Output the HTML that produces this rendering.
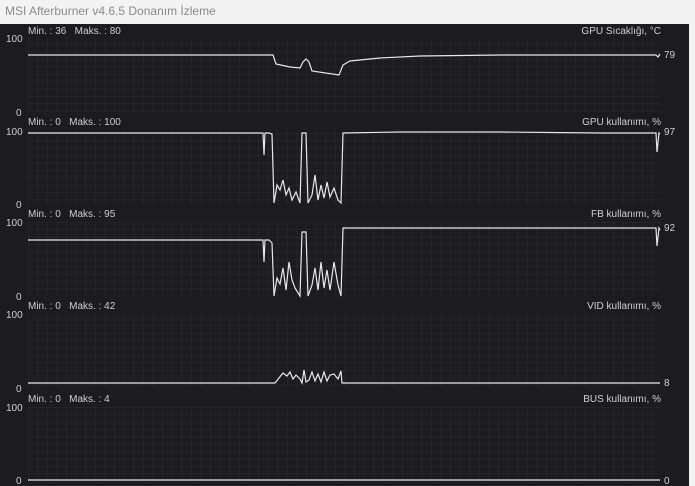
<!DOCTYPE html>
<html><head><meta charset="utf-8"><style>
html,body{margin:0;padding:0;width:695px;height:486px;overflow:hidden;background:#f3f3f3;font-family:"Liberation Sans",sans-serif}
#t{position:absolute;left:0;top:0;width:695px;height:24px;background:#f3f3f3;color:#8a8a8a;font-size:12px;line-height:22px;padding-left:5px;box-sizing:border-box}
#g{position:absolute;left:0;top:24px;width:689px;height:462px;background:#1c1c1e}
text{white-space:pre}
</style></head><body>
<div id="t">MSI Afterburner v4.6.5 Donanım İzleme</div>
<div id="g"></div>
<svg width="695" height="486" style="position:absolute;left:0;top:0" font-family="Liberation Sans, sans-serif">
<defs>
<pattern id="gr" x="28" y="0" width="9.6" height="7.4" patternUnits="userSpaceOnUse">
<path d="M0 0V7.4M0 0H9.6" stroke="#2d2d30" stroke-width="1" fill="none"/>
</pattern>
</defs>
<g>
<rect x="28" y="38" width="633" height="74" fill="url(#gr)"/>
<rect x="28" y="131" width="633" height="74" fill="url(#gr)"/>
<rect x="28" y="222" width="633" height="74" fill="url(#gr)"/>
<rect x="28" y="314" width="633" height="74" fill="url(#gr)"/>
<rect x="28" y="407" width="633" height="74" fill="url(#gr)"/>
</g>
<g fill="#cfcfcf" font-size="10">
<text x="6" y="42">100</text><text x="16" y="116">0</text>
<text x="6" y="135">100</text><text x="16" y="208">0</text>
<text x="6" y="226">100</text><text x="16" y="300">0</text>
<text x="6" y="318">100</text><text x="16" y="392">0</text>
<text x="6" y="411">100</text><text x="16" y="484">0</text>
<text x="28" y="34" xml:space="preserve">Min. : 36   Maks. : 80</text>
<text x="28" y="125" xml:space="preserve">Min. : 0   Maks. : 100</text>
<text x="28" y="217" xml:space="preserve">Min. : 0   Maks. : 95</text>
<text x="28" y="309" xml:space="preserve">Min. : 0   Maks. : 42</text>
<text x="28" y="402" xml:space="preserve">Min. : 0   Maks. : 4</text>
<g text-anchor="end">
<text x="661" y="34">GPU Sıcaklığı, °C</text>
<text x="661" y="125">GPU kullanımı, %</text>
<text x="661" y="217">FB kullanımı, %</text>
<text x="661" y="309">VID kullanımı, %</text>
<text x="661" y="402">BUS kullanımı, %</text>
</g>
<text x="664" y="58">79</text>
<text x="664" y="135">97</text>
<text x="664" y="231">92</text>
<text x="664" y="386">8</text>
<text x="664" y="484">0</text>
</g>
<g stroke="#e8e8e8" stroke-width="1.2" fill="none">
<polyline points="28,55 273,55 276,64 290,67 300,68 303,62 306,59 309,62 312,71 339,75 343,65 350,61 380,58 420,56 500,55 656,55 658,57 660,54"/>
<polyline points="28,133 263,133 264,155 265,133 267,133 269,133 272,134 274,203 277,185 280,190 283,180 286,195 289,188 292,200 296,192 300,203 302,133 306,133 308,203 312,195 315,175 318,200 321,185 324,198 327,182 330,197 334,188 338,200 341,203 343,133 400,132 500,132 600,133 656,133 657,152 659,133 660,134"/>
<polyline points="28,240 263,240 264,262 265,240 269,240 272,243 274,296 277,278 280,284 283,268 286,290 289,262 292,280 295,288 300,296 302,232 306,232 308,296 312,285 315,268 318,290 321,262 324,288 327,270 330,290 334,262 338,285 341,296 343,228 400,228 500,228 600,228 656,228 657,246 659,228 660,230"/>
<polyline points="28,383 275,383 279,378 283,373 287,376 290,372 293,379 296,375 300,379 302,383 304,370 306,382 309,380 312,372 315,381 318,374 321,382 324,372 327,381 330,375 334,374 338,379 341,371 342,383 660,383"/>
<polyline points="28,480 660,480"/>
</g>
</svg>
</body></html>
